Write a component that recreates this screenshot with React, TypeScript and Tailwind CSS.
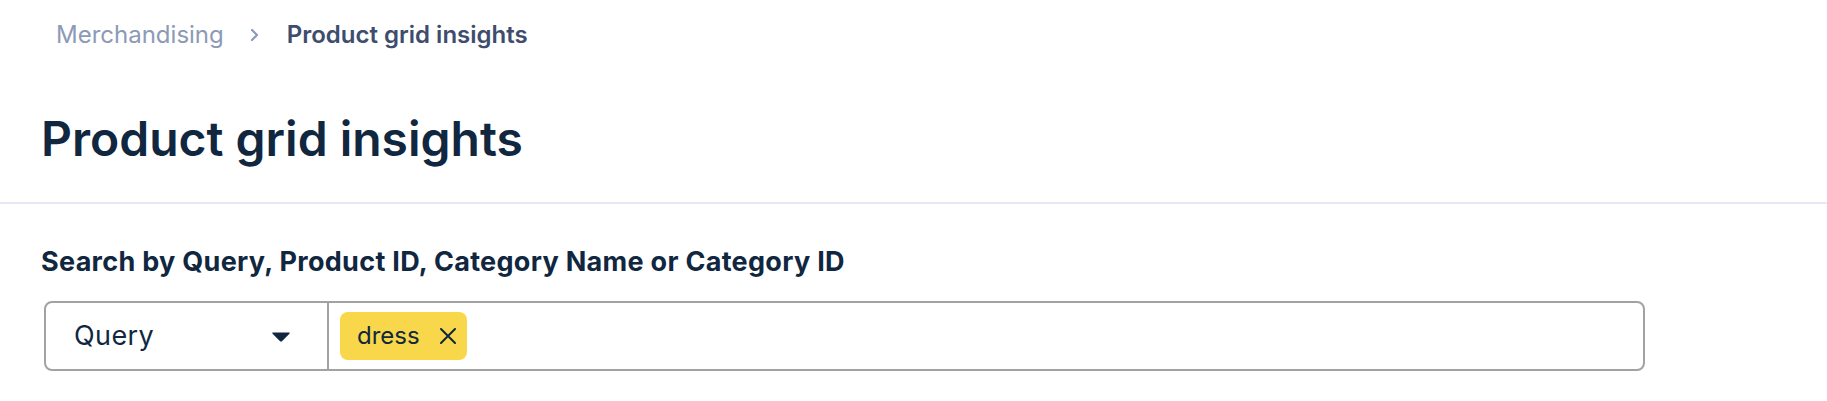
import React from "react";

export default function App() {
  return (
    <div className="min-h-[401px] w-full bg-white font-['Inter','Noto_Sans',sans-serif] text-[#10273f]">
      <nav className="flex h-[70px] items-center pl-[56px] text-[24px]">
        <span className="text-[#8c9ab6]">Merchandising</span>
        <svg className="ml-[24px] mr-[25px]" width="14" height="16" viewBox="0 0 14 16" fill="none">
          <path d="M4 3l5 5-5 5" stroke="#8c9ab6" strokeWidth="2.2" strokeLinecap="round" strokeLinejoin="round" />
        </svg>
        <span className="font-semibold text-[#3e4c6d]">Product grid insights</span>
      </nav>
      <h1 className="mt-[40px] pl-[41px] text-[48px] font-semibold leading-[58px]">
        Product grid insights
      </h1>
      <div className="mt-[34px] h-[2px] w-full bg-[#e6e8f6]" />
      <section className="pl-[41px]">
        <h2 className="mt-[42px] text-[27px] font-bold leading-[32px] tracking-[0.3px]">
          Search by Query, Product ID, Category Name or Category ID
        </h2>
        <div className="mt-[23px] ml-[3px] flex h-[70px] w-[1601px] rounded-[8px] border-2 border-[#a2a2a2]">
          <div className="flex w-[283px] items-center justify-between border-r-2 border-[#a2a2a2] pl-[28px] pr-[36px]">
            <span className="text-[27px] tracking-[0.4px]">Query</span>
            <svg width="20" height="13" viewBox="0 0 20 13">
              <path d="M2 2.5 H18 Q19.5 2.5 18.4 3.8 L11.2 11 Q10 12.2 8.8 11 L1.6 3.8 Q0.5 2.5 2 2.5 Z" fill="#10273f" />
            </svg>
          </div>
          <div className="flex items-center pl-[11px]">
            <div className="flex h-[48px] items-center rounded-[8px] bg-[#f8d74a] pl-[17px] pr-[11px]">
              <span className="text-[24px]">dress</span>
              <svg className="ml-[20px]" width="16" height="16" viewBox="0 0 16 16">
                <path d="M1 1 L15 15 M15 1 L1 15" stroke="#10273f" strokeWidth="2" strokeLinecap="round" />
              </svg>
            </div>
          </div>
        </div>
      </section>
    </div>
  );
}
